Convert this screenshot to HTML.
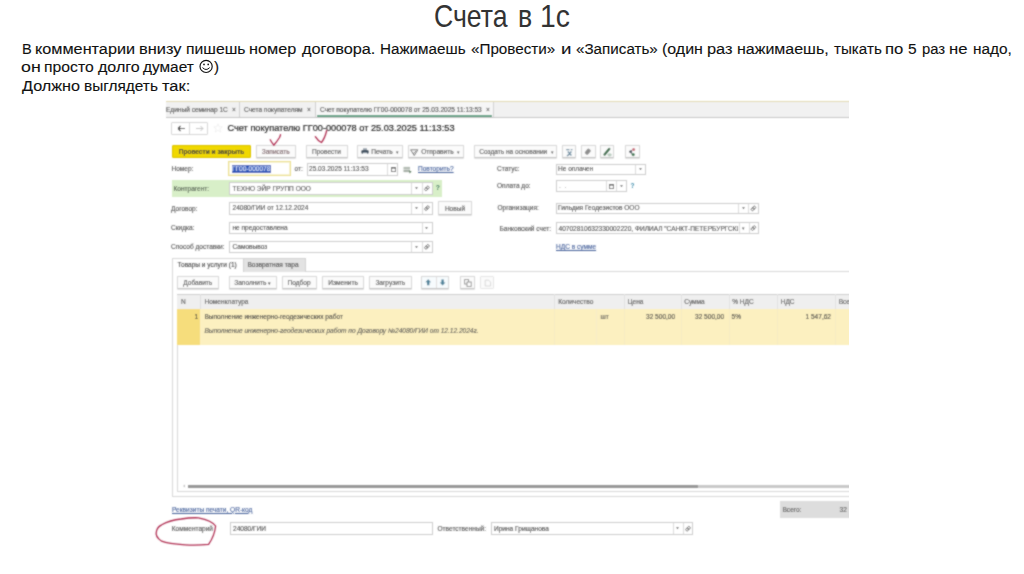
<!DOCTYPE html>
<html><head><meta charset="utf-8">
<style>
html,body{margin:0;padding:0;background:#fff;width:1024px;height:574px;overflow:hidden;position:relative}
.a{position:absolute}
.t{position:absolute;white-space:nowrap;font-family:"Liberation Sans",sans-serif;line-height:1}
.s{font-size:15.5px;color:#111;-webkit-text-stroke:0.12px #111}
.sc{position:absolute;left:0;top:0;width:849px;height:574px;overflow:hidden;filter:url(#bl)}
.f{font-size:6.55px;color:#555;-webkit-text-stroke:0.12px #555;margin-top:0.4px}
.v{font-size:6.55px;color:#3a3a3a;-webkit-text-stroke:0.1px #444;margin-top:0.4px}
.inp{position:absolute;border:1px solid #cccccc;background:#fff;box-sizing:border-box}
.dv{position:absolute;top:0;bottom:0;width:1px;background:#dadada}
.dd{position:absolute;top:0;bottom:0;width:10px;font-family:"Liberation Sans",sans-serif;font-size:5px;color:#555;display:flex;align-items:center;justify-content:center}
.btn{position:absolute;border:1px solid #d9d9d9;border-bottom-color:#c4c4c4;background:#fbfbfb;box-sizing:border-box;border-radius:1px;box-shadow:0 0.6px 0.8px #e2e2e2}
.btn span{position:absolute;left:0;right:0;top:0;bottom:0;display:flex;align-items:center;justify-content:center;font-family:"Liberation Sans",sans-serif;font-size:6.55px;color:#4a4a4a;white-space:nowrap;-webkit-text-stroke:0.1px #4a4a4a;padding-top:0.6px}
.lnk{color:#45609a;text-decoration:underline;-webkit-text-stroke-color:#45609a}
</style></head><body>
<svg width="0" height="0" style="position:absolute"><filter id="bl" x="0" y="0" width="100%" height="100%"><feConvolveMatrix order="3" kernelMatrix="1 2 1 2 8 2 1 2 1" divisor="20" edgeMode="duplicate"/></filter></svg>

<!-- slide title -->
<div class="t" style="left:434.45px;top:-0.3px;font-size:30.5px;color:#333;line-height:33px;transform:scaleX(0.874);transform-origin:0 0">Счета</div>
<div class="t" style="left:518.45px;top:-0.3px;font-size:30.5px;color:#333;line-height:33px;transform:scaleX(0.877);transform-origin:0 0">в</div>
<div class="t" style="left:540.24px;top:-0.3px;font-size:30.5px;color:#333;line-height:33px;transform:scaleX(0.928);transform-origin:0 0">1с</div>
<div class="t s" style="left:21.86px;top:40.7px;transform:scaleX(0.939);transform-origin:0 0">В</div>
<div class="t s" style="left:35.35px;top:40.7px;transform:scaleX(1.047);transform-origin:0 0">комментарии</div>
<div class="t s" style="left:139.24px;top:40.7px;transform:scaleX(1.059);transform-origin:0 0">внизу</div>
<div class="t s" style="left:185.99px;top:40.7px;transform:scaleX(1.014);transform-origin:0 0">пишешь</div>
<div class="t s" style="left:249.25px;top:40.7px;transform:scaleX(1.048);transform-origin:0 0">номер</div>
<div class="t s" style="left:301.90px;top:40.7px;transform:scaleX(1.051);transform-origin:0 0">договора.</div>
<div class="t s" style="left:380.42px;top:40.7px;transform:scaleX(0.981);transform-origin:0 0">Нажимаешь</div>
<div class="t s" style="left:471.22px;top:40.7px;transform:scaleX(0.982);transform-origin:0 0">«Провести»</div>
<div class="t s" style="left:560.50px;top:40.7px;transform:scaleX(1.200);transform-origin:0 0">и</div>
<div class="t s" style="left:575.62px;top:40.7px;transform:scaleX(0.980);transform-origin:0 0">«Записать»</div>
<div class="t s" style="left:662.07px;top:40.7px;transform:scaleX(1.029);transform-origin:0 0">(один</div>
<div class="t s" style="left:707.34px;top:40.7px;transform:scaleX(1.057);transform-origin:0 0">раз</div>
<div class="t s" style="left:737.07px;top:40.7px;transform:scaleX(1.031);transform-origin:0 0">нажимаешь,</div>
<div class="t s" style="left:834.00px;top:40.7px;transform:scaleX(0.979);transform-origin:0 0">тыкать</div>
<div class="t s" style="left:885.32px;top:40.7px;transform:scaleX(1.075);transform-origin:0 0">по</div>
<div class="t s" style="left:908.00px;top:40.7px;transform:scaleX(1.000);transform-origin:0 0">5</div>
<div class="t s" style="left:922.04px;top:40.7px;transform:scaleX(0.957);transform-origin:0 0">раз</div>
<div class="t s" style="left:949.42px;top:40.7px;transform:scaleX(1.075);transform-origin:0 0">не</div>
<div class="t s" style="left:972.91px;top:40.7px;transform:scaleX(0.992);transform-origin:0 0">надо,</div>
<div class="t s" style="left:21.15px;top:59.4px;transform:scaleX(1.147);transform-origin:0 0">он</div>
<div class="t s" style="left:43.99px;top:59.4px;transform:scaleX(1.015);transform-origin:0 0">просто</div>
<div class="t s" style="left:98.00px;top:59.4px;transform:scaleX(1.035);transform-origin:0 0">долго</div>
<div class="t s" style="left:143.30px;top:59.4px;transform:scaleX(0.994);transform-origin:0 0">думает</div>
<div class="t s" style="left:213.60px;top:59.4px;transform:scaleX(0.975);transform-origin:0 0">)</div>
<div class="t s" style="left:21.60px;top:77.6px;transform:scaleX(1.045);transform-origin:0 0">Должно</div>
<div class="t s" style="left:84.01px;top:77.6px;transform:scaleX(0.993);transform-origin:0 0">выглядеть</div>
<div class="t s" style="left:162.20px;top:77.6px;transform:scaleX(1.062);transform-origin:0 0">так:</div>
<svg class="a" style="left:0;top:0" width="240" height="80" viewBox="0 0 240 80"><g stroke="#111" fill="none"><circle cx="206.1" cy="66.4" r="6.1" stroke-width="1.15"/><path d="M202.5 67.6 Q206.1 71.4 209.7 67.6" stroke-width="1"/></g><circle cx="204" cy="64.4" r="0.85" fill="#111"/><circle cx="208.2" cy="64.4" r="0.85" fill="#111"/></svg>

<div class="sc">
<!-- tab bar -->
<div class="a" style="left:166px;top:101px;width:683px;height:17px;background:#f1f1f1;border-top:1px solid #e2dab0;border-bottom:1px solid #c6c6c6;box-sizing:border-box"></div>
<div class="a" style="left:239px;top:102px;width:1px;height:15px;background:#cfcfcf"></div>
<div class="a" style="left:315px;top:102px;width:1px;height:15px;background:#cfcfcf"></div>
<div class="a" style="left:316px;top:102px;width:177px;height:15px;background:#f6f6f6"></div>
<div class="a" style="left:493px;top:102px;width:1px;height:15px;background:#d2d2d2"></div>
<div class="a" style="left:317px;top:115px;width:175px;height:1.6px;background:#5fa385"></div>
<div class="t f" style="left:166px;top:106.9px;color:#444">Единый семинар 1С</div>
<div class="t f" style="left:232px;top:106.9px;color:#666">×</div>
<div class="t f" style="left:244px;top:106.9px;color:#444">Счета покупателям</div>
<div class="t f" style="left:307px;top:106.9px;color:#666">×</div>
<div class="t f" style="left:320px;top:106.9px;color:#3a3a3a">Счет покупателю ГГ00-000078 от 25.03.2025 11:13:53</div>
<div class="t f" style="left:486px;top:106.9px;color:#666">×</div>

<!-- nav -->
<div class="btn" style="left:171.3px;top:122.1px;width:36.8px;height:12.6px;box-shadow:none;background:#fff;border-color:#d6d6d6"></div>
<div class="a" style="left:189.4px;top:122.6px;width:1px;height:11.8px;background:#d6d6d6"></div>
<svg class="a" style="left:177px;top:125px" width="9" height="7" viewBox="0 0 9 7"><path d="M1 3.5H8M1 3.5L3.5 1M1 3.5L3.5 6" stroke="#333" stroke-width="1.1" fill="none"/></svg>
<svg class="a" style="left:195px;top:125px" width="9" height="7" viewBox="0 0 9 7"><path d="M1 3.5H8M8 3.5L5.5 1M8 3.5L5.5 6" stroke="#c4c4c4" stroke-width="1" fill="none"/></svg>
<svg class="a" style="left:213px;top:123px" width="10" height="10" viewBox="0 0 10 10"><path d="M5 0.8L6.2 3.8L9.3 3.9L6.9 5.9L7.7 9L5 7.3L2.3 9L3.1 5.9L0.7 3.9L3.8 3.8Z" stroke="#efefef" stroke-width="0.8" fill="none"/></svg>
<div class="t" style="left:227.5px;top:124.4px;font-size:9.2px;color:#262626;-webkit-text-stroke:0.2px #262626">Счет покупателю ГГ00-000078 от 25.03.2025 11:13:53</div>

<!-- toolbar -->
<div class="btn" style="left:172px;top:144.8px;width:79px;height:13px;background:#f0d800;border-color:#dcc400;box-shadow:none"><span style="color:#3a3a3a;font-weight:bold">Провести и закрыть</span></div>
<div class="btn" style="left:255.5px;top:144.8px;width:40.5px;height:13px"><span style="color:#6e5258;-webkit-text-stroke-color:#6e5258">Записать</span></div>
<div class="btn" style="left:305.5px;top:144.8px;width:42px;height:13px"><span>Провести</span></div>
<div class="btn" style="left:357px;top:144.8px;width:45.5px;height:13.4px"></div>
<svg class="a" style="left:361px;top:148.3px" width="8" height="7.5" viewBox="0 0 8 7.5"><rect x="2" y="0.2" width="4" height="2" fill="#9aa4ae"/><rect x="0.3" y="2" width="7.4" height="3.8" rx="1.2" fill="#3f4f5f"/><rect x="2" y="4.6" width="4" height="2.6" fill="#fff"/><rect x="2" y="4.6" width="4" height="0.6" fill="#6a7a8a"/></svg>
<div class="t f" style="left:371.2px;top:148.7px;color:#4a4a4a">Печать</div>
<div class="t" style="left:396.2px;top:149.9px;font-size:5px;color:#555">▾</div>
<div class="btn" style="left:407.5px;top:144.8px;width:56.2px;height:13.4px"></div>
<svg class="a" style="left:410.2px;top:148.6px" width="8.5" height="7.2" viewBox="0 0 8.5 7.2"><path d="M0.6 0.8H7.9L4.25 6.6Z" stroke="#6a6a6a" stroke-width="0.9" fill="none"/><path d="M2.6 3.4L3.9 4.6L6 1.8" stroke="#6a6a6a" stroke-width="0.8" fill="none"/></svg>
<div class="t f" style="left:421.2px;top:148.7px;color:#4a4a4a">Отправить</div>
<div class="t" style="left:457.2px;top:149.9px;font-size:5px;color:#555">▾</div>
<div class="btn" style="left:473.5px;top:144.8px;width:83.8px;height:13.4px"></div>
<div class="t f" style="left:479.3px;top:148.7px;color:#4a4a4a">Создать на основании</div>
<div class="t" style="left:550.5px;top:149.9px;font-size:5px;color:#555">▾</div>
<div class="btn" style="left:562.3px;top:144.8px;width:14px;height:13.4px"></div>
<div class="btn" style="left:581px;top:144.8px;width:14.5px;height:13.4px"></div>
<div class="btn" style="left:600.3px;top:144.8px;width:14px;height:13.4px"></div>
<div class="btn" style="left:625.2px;top:144.8px;width:14.5px;height:13.4px"></div>
<svg class="a" style="left:0;top:0" width="849" height="200" viewBox="0 0 849 200">
<path d="M566.2 149.6h3.2M570.8 149.6h1.6M567.8 151.6l3.6 3.8M571.4 151.6l-3.6 3.8M566.8 155.6h1.2" stroke="#6f8ea2" stroke-width="1.4" fill="none"/>
<rect x="585.8" y="148.6" width="4" height="6.2" rx="1.4" transform="rotate(40 587.8 151.7)" fill="#8e8e8e"/>
<path d="M604.6 154.6L609.2 149" stroke="#3d6f4d" stroke-width="2.4" stroke-linecap="round"/>
<ellipse cx="609.6" cy="154.8" rx="2.2" ry="1.6" fill="#b9ccbf"/>
<path d="M629 151.6l2.6 -1.2l0 3z" fill="#4d5560" stroke="#4d5560" stroke-width="1"/>
<circle cx="633.6" cy="149.6" r="1.5" fill="#c86a78"/>
<circle cx="633.2" cy="154.6" r="1.6" fill="#3f7a55"/>
</svg>
<!-- row: Номер -->
<div class="t f" style="left:171.5px;top:165.8px">Номер:</div>
<div class="inp" style="left:228.4px;top:161.2px;width:62.2px;height:15.3px;border:1.5px solid #ece08e;box-shadow:inset 0 0 0 1px #f8f3d2"></div>
<div class="a" style="left:231.8px;top:165.1px;width:39px;height:7.6px;background:#2f56b8"></div>
<div class="t v" style="left:232px;top:165.6px;color:#e6eeff;-webkit-text-stroke:0.1px #e6eeff">ГГ00-000078</div>
<div class="t f" style="left:294.5px;top:165.8px">от:</div>
<div class="inp" style="left:306.5px;top:163px;width:91.5px;height:12.5px"><div class="dv" style="left:79.1px"></div>
 <svg class="a" style="left:83px;top:3px" width="5" height="5" viewBox="0 0 5 5"><rect x="0.4" y="0.4" width="4.2" height="4.2" stroke="#555" stroke-width="0.8" fill="none"/><rect x="0" y="0" width="5" height="1.5" fill="#555"/></svg></div>
<div class="t v" style="left:309px;top:165.8px">25.03.2025 11:13:53</div>
<svg class="a" style="left:403px;top:165.5px" width="10" height="8" viewBox="0 0 10 8"><rect x="0.5" y="0.9" width="6.5" height="2.4" fill="#b4bcb4"/><rect x="0.5" y="3.7" width="6.5" height="2.4" fill="#a9b2a9"/><path d="M6 4.6L8.6 5.6L6.6 7.6Z" fill="#5d7d62"/></svg>
<div class="t f lnk" style="left:418px;top:165.8px">Повторить?</div>

<div class="t f" style="left:497px;top:165.8px">Статус:</div>
<div class="inp" style="left:556px;top:163.5px;width:89.5px;height:11.5px"><div class="dv" style="left:78.2px"></div><div class="dd" style="left:78.2px;width:10.5px"><svg width="3" height="2.4" viewBox="0 0 3 2.4" style="display:block"><path d="M0.1 0.2H2.9L1.5 2.2Z" fill="#555"/></svg></div></div>
<div class="t v" style="left:558px;top:166px">Не оплачен</div>

<!-- row: Контрагент -->
<div class="a" style="left:171.5px;top:180px;width:270px;height:17px;background:#d8efc8"></div>
<div class="t f" style="left:173.5px;top:185.3px;color:#4a5a4a">Контрагент:</div>
<div class="inp" style="left:229px;top:182px;width:203.5px;height:13px"><div class="dv" style="left:181.3px"></div><div class="dd" style="left:181.3px;width:10.5px"><svg width="3" height="2.4" viewBox="0 0 3 2.4" style="display:block"><path d="M0.1 0.2H2.9L1.5 2.2Z" fill="#555"/></svg></div><div class="dv" style="left:191.8px"></div></div>
<div class="t v" style="left:232.5px;top:185.3px">ТЕХНО ЭЙР ГРУПП ООО</div>
<div class="t" style="left:435.8px;top:185.2px;font-size:6.8px;color:#2f6f58;font-weight:bold">?</div>

<div class="t f" style="left:497px;top:182.8px">Оплата до:</div>
<div class="inp" style="left:556px;top:180px;width:70.5px;height:12px"><div class="dv" style="left:48.7px"></div><div class="dv" style="left:59.2px"></div><div class="dd" style="left:59.2px;width:10.5px"><svg width="3" height="2.4" viewBox="0 0 3 2.4" style="display:block"><path d="M0.1 0.2H2.9L1.5 2.2Z" fill="#555"/></svg></div>
 <svg class="a" style="left:52px;top:3px" width="5" height="5" viewBox="0 0 5 5"><rect x="0.4" y="0.4" width="4.2" height="4.2" stroke="#555" stroke-width="0.8" fill="none"/><rect x="0" y="0" width="5" height="1.5" fill="#555"/></svg></div>
<div class="t v" style="left:559px;top:183px;color:#aaa">.&nbsp;&nbsp;.</div>
<div class="t" style="left:630.5px;top:182.5px;font-size:6.5px;color:#3a8aaa;font-weight:bold">?</div>

<!-- row: Договор -->
<div class="t f" style="left:171px;top:205.2px">Договор:</div>
<div class="inp" style="left:229px;top:201.5px;width:203.5px;height:13px"><div class="dv" style="left:181.3px"></div><div class="dd" style="left:181.3px;width:10.5px"><svg width="3" height="2.4" viewBox="0 0 3 2.4" style="display:block"><path d="M0.1 0.2H2.9L1.5 2.2Z" fill="#555"/></svg></div><div class="dv" style="left:191.8px"></div></div>
<div class="t v" style="left:232.5px;top:205px">24080/ГИИ от 12.12.2024</div>
<div class="btn" style="left:438px;top:201.2px;width:34px;height:13.5px"><span>Новый</span></div>

<div class="t f" style="left:497.5px;top:204.7px">Организация:</div>
<div class="inp" style="left:555.5px;top:202.5px;width:203px;height:11.8px"><div class="dv" style="left:181.8px"></div><div class="dd" style="left:181.8px;width:10.5px"><svg width="3" height="2.4" viewBox="0 0 3 2.4" style="display:block"><path d="M0.1 0.2H2.9L1.5 2.2Z" fill="#555"/></svg></div><div class="dv" style="left:191.9px"></div></div>
<div class="t v" style="left:558px;top:205px">Гильдия Геодезистов ООО</div>

<!-- row: Скидка -->
<div class="t f" style="left:171px;top:224.5px">Скидка:</div>
<div class="inp" style="left:229px;top:221.5px;width:203.5px;height:12.5px"><div class="dv" style="left:191.8px"></div><div class="dd" style="left:191.3px;width:10.5px"><svg width="3" height="2.4" viewBox="0 0 3 2.4" style="display:block"><path d="M0.1 0.2H2.9L1.5 2.2Z" fill="#555"/></svg></div></div>
<div class="t v" style="left:232.5px;top:224.8px">не предоставлена</div>

<div class="t f" style="left:499.5px;top:225.2px">Банковский счет:</div>
<div class="inp" style="left:555.5px;top:222.3px;width:203px;height:11.8px;overflow:hidden"><div class="t v" style="left:2px;top:2.5px">40702810632330002220, ФИЛИАЛ "САНКТ-ПЕТЕРБУРГСКИЙ"</div><div style="position:absolute;left:181.8px;top:0;bottom:0;width:22px;background:#fff"></div><div class="dv" style="left:182px"></div><div class="dd" style="left:182px">▾</div><div class="dv" style="left:192px"></div></div>

<!-- row: Способ доставки -->
<div class="t f" style="left:171px;top:243.8px">Способ доставки:</div>
<div class="inp" style="left:229px;top:241px;width:203.5px;height:11.5px"><div class="dv" style="left:181.3px"></div><div class="dd" style="left:181.3px;width:10.5px"><svg width="3" height="2.4" viewBox="0 0 3 2.4" style="display:block"><path d="M0.1 0.2H2.9L1.5 2.2Z" fill="#555"/></svg></div><div class="dv" style="left:191.8px"></div></div>
<div class="t v" style="left:232.5px;top:243.8px">Самовывоз</div>
<div class="t f lnk" style="left:556px;top:243.8px">НДС в сумме</div>

<!-- open icons (link) -->
<svg class="a" style="left:0;top:0" width="849" height="574" viewBox="0 0 849 574">
<g stroke="#5a5a5a" stroke-width="0.8" fill="none">
<g transform="translate(426.9 188.4) rotate(-45)"><rect x="-2.6" y="-1.3" width="3.2" height="2.6" rx="1.1"/><rect x="-0.6" y="-1.3" width="3.2" height="2.6" rx="1.1"/></g>
<g transform="translate(426.9 208.1) rotate(-45)"><rect x="-2.6" y="-1.3" width="3.2" height="2.6" rx="1.1"/><rect x="-0.6" y="-1.3" width="3.2" height="2.6" rx="1.1"/></g>
<g transform="translate(426.9 246.8) rotate(-45)"><rect x="-2.6" y="-1.3" width="3.2" height="2.6" rx="1.1"/><rect x="-0.6" y="-1.3" width="3.2" height="2.6" rx="1.1"/></g>
<g transform="translate(753.4 208.4) rotate(-45)"><rect x="-2.6" y="-1.3" width="3.2" height="2.6" rx="1.1"/><rect x="-0.6" y="-1.3" width="3.2" height="2.6" rx="1.1"/></g>
<g transform="translate(753.4 228.1) rotate(-45)"><rect x="-2.6" y="-1.3" width="3.2" height="2.6" rx="1.1"/><rect x="-0.6" y="-1.3" width="3.2" height="2.6" rx="1.1"/></g>
</g>
</svg>

<!-- tab panel -->
<div class="a" style="left:171.5px;top:258px;width:678px;height:238.5px;border:1px solid #d9d9d9;border-top:none;box-sizing:border-box"></div>
<div class="a" style="left:171.5px;top:258px;width:71px;height:1px;background:#d9d9d9"></div>
<div class="a" style="left:242.5px;top:258px;width:63px;height:13.5px;background:#e3e3e3;border:1px solid #d2d2d2;border-bottom:none;box-sizing:border-box"></div>
<div class="a" style="left:305.5px;top:271px;width:545px;height:1px;background:#d9d9d9"></div>
<div class="t f" style="left:177.5px;top:261.8px;color:#444">Товары и услуги (1)</div>
<div class="t f" style="left:247.5px;top:261.8px;color:#444">Возвратная тара</div>

<!-- table toolbar -->
<div class="btn" style="left:177px;top:276.3px;width:41.5px;height:12.5px"><span>Добавить</span></div>
<div class="btn" style="left:229px;top:276.3px;width:47.5px;height:12.5px"><span>Заполнить&nbsp;<small style="font-size:5px">▾</small></span></div>
<div class="btn" style="left:281.5px;top:276.3px;width:35px;height:12.5px"><span>Подбор</span></div>
<div class="btn" style="left:322px;top:276.3px;width:42.2px;height:12.5px"><span>Изменить</span></div>
<div class="btn" style="left:369px;top:276.3px;width:42.7px;height:12.5px"><span>Загрузить</span></div>
<div class="btn" style="left:421.3px;top:276.3px;width:28.2px;height:12.5px;background:#f7fbfd"><div class="a" style="left:13.3px;top:0;bottom:0;width:1px;background:#e2dede"></div></div>
<svg class="a" style="left:0;top:0" width="849" height="300" viewBox="0 0 849 300"><g fill="#4b8199">
<path d="M428.2 279.2L431 282.2L429.4 282.2L429.4 285.2L427 285.2L427 282.2L425.4 282.2Z"/>
<path d="M442.6 285.6L445.4 282.6L443.8 282.6L443.8 279.6L441.4 279.6L441.4 282.6L439.8 282.6Z"/>
</g></svg>
<div class="btn" style="left:460.3px;top:276.3px;width:14.4px;height:12.5px"><svg class="a" style="left:3px;top:2px" width="8" height="8" viewBox="0 0 8 8"><rect x="0.6" y="0.6" width="4" height="4.4" fill="#fff" stroke="#8a8a8a" stroke-width="0.9"/><rect x="3" y="3" width="4.2" height="4.4" fill="#fff" stroke="#8a8a8a" stroke-width="0.9"/></svg></div>
<div class="btn" style="left:479.8px;top:276.3px;width:13.9px;height:12.5px;border-color:#e6e6e6;box-shadow:none"><svg class="a" style="left:3px;top:2px" width="8" height="8" viewBox="0 0 8 8"><path d="M1.2 1.2H4.6L6.6 3.2V7H1.2Z" fill="none" stroke="#d4d4d4" stroke-width="0.9"/></svg></div>

<!-- table -->
<div class="a" style="left:176.8px;top:293.5px;width:673px;height:198.5px;border:1px solid #d9d9d9;border-right:none;box-sizing:border-box"></div>
<div class="a" style="left:176.8px;top:293.5px;width:673px;height:15.5px;background:#efefef;border-top:1px solid #cfcfcf;box-sizing:border-box"></div>
<div class="a" style="left:176.8px;top:309px;width:673px;height:35.5px;background:#fcf0c0"></div>
<div class="a" style="left:176.8px;top:309px;width:23.5px;height:35.5px;background:#f6dd7c"></div>
<!-- col dividers -->
<div class="a" style="left:200.3px;top:294px;width:1px;height:15px;background:#dedede"></div>
<div class="a" style="left:554px;top:294px;width:1px;height:15px;background:#e2e2e2"></div>
<div class="a" style="left:554px;top:309px;width:1px;height:35.5px;background:#f5eac4"></div>
<div class="a" style="left:623.7px;top:294px;width:1px;height:15px;background:#e2e2e2"></div>
<div class="a" style="left:623.7px;top:309px;width:1px;height:35.5px;background:#f5eac4"></div>
<div class="a" style="left:681.2px;top:294px;width:1px;height:15px;background:#e2e2e2"></div>
<div class="a" style="left:681.2px;top:309px;width:1px;height:35.5px;background:#f5eac4"></div>
<div class="a" style="left:729px;top:294px;width:1px;height:15px;background:#e2e2e2"></div>
<div class="a" style="left:729px;top:309px;width:1px;height:35.5px;background:#f5eac4"></div>
<div class="a" style="left:776.6px;top:294px;width:1px;height:15px;background:#e2e2e2"></div>
<div class="a" style="left:776.6px;top:309px;width:1px;height:35.5px;background:#f5eac4"></div>
<div class="a" style="left:835.3px;top:294px;width:1px;height:15px;background:#e2e2e2"></div>
<div class="a" style="left:835.3px;top:309px;width:1px;height:35.5px;background:#f5eac4"></div>
<div class="a" style="left:596.2px;top:309px;width:1px;height:35.5px;background:#f7edc8"></div>
<div class="t f" style="left:181px;top:298.2px">N</div>
<div class="t f" style="left:204.5px;top:298.2px">Номенклатура</div>
<div class="t f" style="left:558.2px;top:298.2px">Количество</div>
<div class="t f" style="left:627.7px;top:298.2px">Цена</div>
<div class="t f" style="left:684.2px;top:298.2px">Сумма</div>
<div class="t f" style="left:732.2px;top:298.2px">% НДС</div>
<div class="t f" style="left:780.7px;top:298.2px">НДС</div>
<div class="t f" style="left:838.7px;top:298.2px">Всего</div>
<div class="t v" style="left:194.5px;top:313.4px">1</div>
<div class="t v" style="left:204.5px;top:313.4px">Выполнение инженерно-геодезических работ</div>
<div class="t v" style="left:204.5px;top:327.8px;font-style:italic;color:#555">Выполнение инженерно-геодезических работ по Договору №24080/ГИИ от 12.12.2024г.</div>
<div class="t v" style="left:600.5px;top:313.4px;color:#555">шт</div>
<div class="t v" style="left:646px;top:313.4px">32 500,00</div>
<div class="t v" style="left:695px;top:313.4px">32 500,00</div>
<div class="t v" style="left:731.5px;top:313.4px">5%</div>
<div class="t v" style="left:805.5px;top:313.4px">1 547,62</div>

<!-- scrollbar -->
<svg class="a" style="left:181.5px;top:484.3px" width="4" height="4" viewBox="0 0 4 4"><path d="M3 0.5L1 2L3 3.5Z" fill="#c4c4c4"/></svg>
<div class="a" style="left:188px;top:484.6px;width:510px;height:3.5px;background:#999"></div>
<div class="a" style="left:698px;top:484.6px;width:151px;height:3.5px;background:#c9c9c9"></div>

<!-- footer -->
<div class="t f lnk" style="left:172px;top:506.3px">Реквизиты печати, QR-код</div>
<div class="a" style="left:780px;top:501.2px;width:69px;height:16.7px;background:#dddddd"></div>
<div class="t f" style="left:782.5px;top:506.5px">Всего:</div>
<div class="t f" style="left:839.5px;top:506.5px">32</div>

<div class="t f" style="left:171.8px;top:525.4px">Комментарий</div>
<div class="inp" style="left:230px;top:522.4px;width:202.5px;height:12.6px"></div>
<div class="t v" style="left:233px;top:525.6px">24080/ГИИ</div>
<div class="t f" style="left:437.5px;top:525.6px">Ответственный:</div>
<div class="inp" style="left:491px;top:522.4px;width:202px;height:12.6px"><div class="dv" style="left:180.6px"></div><div class="dd" style="left:180.6px;width:10.5px"><svg width="3" height="2.4" viewBox="0 0 3 2.4" style="display:block"><path d="M0.1 0.2H2.9L1.5 2.2Z" fill="#555"/></svg></div><div class="dv" style="left:191.1px"></div></div>
<div class="t v" style="left:494px;top:525.6px">Ирина Грищанова</div>
<svg class="a" style="left:0;top:0" width="849" height="574" viewBox="0 0 849 574"><g stroke="#5a5a5a" stroke-width="0.8" fill="none"><g transform="translate(688 528.7) rotate(-45)"><rect x="-2.6" y="-1.3" width="3.2" height="2.6" rx="1.1"/><rect x="-0.6" y="-1.3" width="3.2" height="2.6" rx="1.1"/></g></g></svg>

</div>

<!-- red annotations -->
<svg class="a" style="left:0;top:0;filter:url(#bl)" width="1024" height="574" viewBox="0 0 1024 574">
<g stroke="#b02f52" stroke-width="1.3" fill="none" stroke-linecap="round" stroke-linejoin="round">
<path d="M270.2 139.8 Q272 143 273.8 145.2 Q277 141.5 279.5 137.5 Q280.3 136 280.5 134.6"/>
<path d="M315.3 136.7 Q318 141 321.4 142.5 Q325 138 326.7 130.5"/>
<path d="M198.4 517.8 Q212 520.5 215.6 526 Q214.5 536 208.6 544.4 Q196 545.5 185.2 544.8 Q168 544 161.7 541.2 Q155 537 156.3 531.9 Q157 527 161.7 524.8 Q170 520 181.2 519 Q190 517.5 198.4 517.8 Z"/>
</g>
</svg>

</body></html>
